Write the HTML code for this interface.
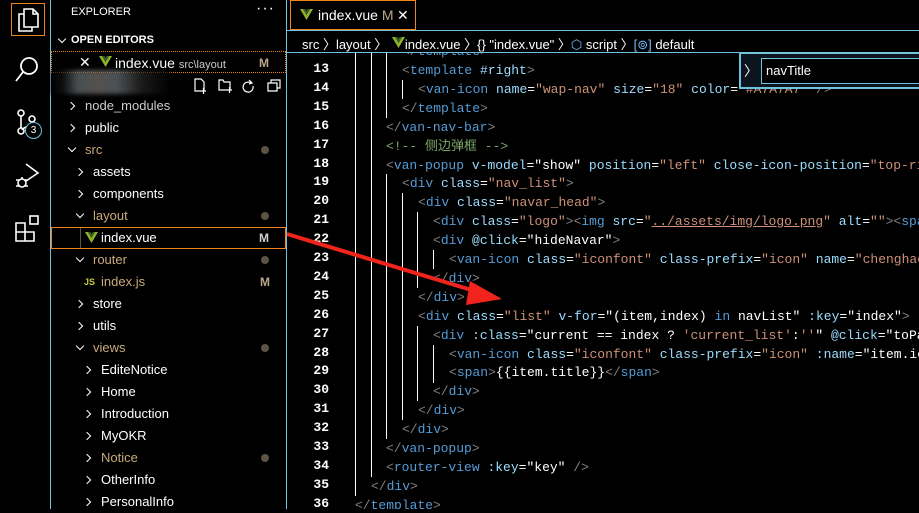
<!DOCTYPE html>
<html><head><meta charset="utf-8"><style>
*{margin:0;padding:0;box-sizing:border-box}
body{width:919px;height:509px;background:#000;overflow:hidden;position:relative;font-family:"Liberation Sans","Noto Sans CJK SC",sans-serif;color:#fff}
.abs{position:absolute}
.act{left:0;top:0;width:51px;height:509px;border-right:1px solid #6fc3df}
.side{left:51px;top:0;width:236px;height:509px;border-right:1px solid #6fc3df}
.row{position:absolute;left:0;width:235px;height:22px;font-size:13px;line-height:22px;white-space:nowrap}
.chev{position:absolute;width:6px;height:6px;border-right:1.4px solid #fff;border-bottom:1.4px solid #fff}
.r{transform:rotate(-45deg)}
.d{transform:rotate(45deg)}
.dot{position:absolute;right:17px;top:7px;width:8px;height:8px;border-radius:50%;background:#5c5343}
.M{position:absolute;right:16px;font-weight:bold;color:#b8a88a;font-size:12px}
.code{font-family:"Liberation Mono",monospace;font-size:13px;white-space:pre}
.ln{position:absolute;left:290px;width:39px;text-align:right;font-family:"Liberation Mono",monospace;font-size:13px;color:#fff;font-weight:bold}
.cl{position:absolute;left:355px;height:19px;line-height:19px}
.g{color:#808080}.t{color:#569cd6}.a{color:#9cdcfe}.s{color:#ce9178}.c{color:#7ca668}.w{color:#fff}
.guide{position:absolute;width:1px;background:#fff}
.vue{position:absolute}
</style></head><body>
<!-- activity bar -->
<div class="abs act">
 <div class="abs" style="left:11px;top:3px;width:34px;height:33px;border:1px solid #f38518"></div>
 <svg class="abs" style="left:15px;top:6px" width="26" height="28" viewBox="0 0 26 28" fill="none" stroke="#fff" stroke-width="1.6"><path d="M9 3h9l5 5v13H9z M18 3v5h5"/><path d="M9 8H4v17h13v-4"/></svg>
 <svg class="abs" style="left:14px;top:56px" width="26" height="28" fill="none" stroke="#fff" stroke-width="1.8"><circle cx="15" cy="10" r="8"/><path d="M9 16L2 25"/></svg>
 <svg class="abs" style="left:14px;top:108px" width="30" height="32" fill="none" stroke="#fff" stroke-width="1.6"><circle cx="7" cy="5" r="3"/><circle cx="7" cy="23" r="3"/><circle cx="18" cy="11" r="3"/><path d="M7 8v12M18 14c0 5-8 4-10 8"/></svg>
 <div class="abs" style="left:25px;top:122px;width:17px;height:17px;border:1px solid #6fc3df;border-radius:50%;background:#000;font-size:10px;text-align:center;line-height:15px">3</div>
 <svg class="abs" style="left:14px;top:160px" width="28" height="30" fill="none" stroke="#fff" stroke-width="1.6"><path d="M12 4l12 9-12 8"/><circle cx="8" cy="23" r="4"/><path d="M2 20h3M2 26h3M11 20h3M11 26h3M8 17v2"/></svg>
 <svg class="abs" style="left:14px;top:213px" width="28" height="30" fill="none" stroke="#fff" stroke-width="1.6"><path d="M2 10h9v9H2zM11 19h9v9h-9zM2 19h9v9H2z"/><rect x="16" y="3" width="8" height="8" stroke="#fff"/></svg>
</div>
<!-- sidebar -->
<div class="abs side">
 <div class="abs" style="left:20px;top:6px;font-size:11px">EXPLORER</div>
 <div class="abs" style="left:205px;top:0px;font-size:16px;letter-spacing:1px">···</div>
 <div class="chev d abs" style="left:8px;top:36px"></div>
 <div class="abs" style="left:20px;top:34px;font-size:11px;font-weight:bold">OPEN EDITORS</div>
 <div class="row" style="top:51px;border:1px dotted #f38518">
   <span class="abs" style="left:27px;top:-1px;font-size:14px">✕</span>
   <svg class="vue" style="left:47px;top:4px" width="13" height="12"><path d="M0 0h3l3.5 6L10 0h3L6.5 11z" fill="#8db32b"/><path d="M3 0h2.5l1 2 1-2H10L6.5 6z" fill="#3a5a2a"/></svg>
   <span class="abs" style="left:63px;font-size:14px">index.vue <span style="font-size:11px;color:#ccc">src\layout</span></span>
   <span class="M" style="top:0">M</span>
 </div>
 <div class="abs" style="left:0;top:70px;width:120px;height:24px;background:linear-gradient(90deg,#000 0,#111 10%,#5a6268 22%,#6a6560 40%,#5d666b 55%,#222 75%,#000);filter:blur(2px);opacity:.8"></div>
 <svg class="abs" style="left:142px;top:78px" width="90" height="16" fill="none" stroke="#fff" stroke-width="1.2"><path d="M2 1h6l3 3v9H2zM8 13h5M10.5 10v6"/><path d="M26 2h4l1 2h6v8H26zM34 12h5M36.5 9v6"/><path d="M58 5a5 5 0 1 0 2 3M56 2l3 3-3 1"/><path d="M75 5h9v8h-9zM78 5V2h9v8h-3"/></svg>
 <div class="row" style="top:95px"><div class="chev r" style="left:17px;top:8px"></div><span class="abs" style="left:34px;color:#ccc">node_modules</span></div>
 <div class="row" style="top:117px"><div class="chev r" style="left:17px;top:8px"></div><span class="abs" style="left:34px">public</span></div>
 <div class="row" style="top:139px"><div class="chev d" style="left:18px;top:6px"></div><span class="abs" style="left:34px;color:#c9a97a">src</span><div class="dot"></div></div>
 <div class="row" style="top:161px"><div class="chev r" style="left:25px;top:8px"></div><span class="abs" style="left:42px">assets</span></div>
 <div class="row" style="top:183px"><div class="chev r" style="left:25px;top:8px"></div><span class="abs" style="left:42px">components</span></div>
 <div class="row" style="top:205px"><div class="chev d" style="left:26px;top:6px"></div><span class="abs" style="left:42px;color:#c9a97a">layout</span><div class="dot"></div></div>
 <div class="row" style="top:227px;border:1px solid #f38518"><div class="abs" style="left:28px;top:0;width:1px;height:20px;background:#555"></div><svg class="vue" style="left:33px;top:4px" width="13" height="12"><path d="M0 0h3l3.5 6L10 0h3L6.5 11z" fill="#8db32b"/><path d="M3 0h2.5l1 2 1-2H10L6.5 6z" fill="#3a5a2a"/></svg><span class="abs" style="left:49px;top:-1px">index.vue</span><span class="M" style="top:-1px;color:#ccc">M</span></div>
 <div class="row" style="top:249px"><div class="chev d" style="left:26px;top:6px"></div><span class="abs" style="left:42px;color:#c9a97a">router</span><div class="dot"></div></div>
 <div class="row" style="top:271px"><span class="abs" style="left:33px;color:#cbcb41;font-size:9px;font-weight:bold">JS</span><span class="abs" style="left:50px;color:#c9a97a">index.js</span><span class="M">M</span></div>
 <div class="row" style="top:293px"><div class="chev r" style="left:25px;top:8px"></div><span class="abs" style="left:42px">store</span></div>
 <div class="row" style="top:315px"><div class="chev r" style="left:25px;top:8px"></div><span class="abs" style="left:42px">utils</span></div>
 <div class="row" style="top:337px"><div class="chev d" style="left:26px;top:6px"></div><span class="abs" style="left:42px;color:#c9a97a">views</span><div class="dot"></div></div>
 <div class="row" style="top:359px"><div class="chev r" style="left:33px;top:8px"></div><span class="abs" style="left:50px">EditeNotice</span></div>
 <div class="row" style="top:381px"><div class="chev r" style="left:33px;top:8px"></div><span class="abs" style="left:50px">Home</span></div>
 <div class="row" style="top:403px"><div class="chev r" style="left:33px;top:8px"></div><span class="abs" style="left:50px">Introduction</span></div>
 <div class="row" style="top:425px"><div class="chev r" style="left:33px;top:8px"></div><span class="abs" style="left:50px">MyOKR</span></div>
 <div class="row" style="top:447px"><div class="chev r" style="left:33px;top:8px"></div><span class="abs" style="left:50px;color:#c9a97a">Notice</span><div class="dot"></div></div>
 <div class="row" style="top:469px"><div class="chev r" style="left:33px;top:8px"></div><span class="abs" style="left:50px">OtherInfo</span></div>
 <div class="row" style="top:491px"><div class="chev r" style="left:33px;top:8px"></div><span class="abs" style="left:50px">PersonalInfo</span></div>
</div>
<!-- tabs -->
<div class="abs" style="left:290px;top:0;width:126px;height:30px;border:1px solid #f38518;font-size:14px;line-height:28px">
 <svg class="vue" style="left:9px;top:8px" width="13" height="12"><path d="M0 0h3l3.5 6L10 0h3L6.5 11z" fill="#8db32b"/><path d="M3 0h2.5l1 2 1-2H10L6.5 6z" fill="#3a5a2a"/></svg><span class="abs" style="left:27px">index.vue <span style="color:#b8a88a">M</span></span><span class="abs" style="left:106px;font-size:14px">✕</span>
</div>
<div class="abs" style="left:287px;top:30px;width:632px;height:1px;background:#6fc3df"></div>
<div class="abs" style="left:302px;top:34px;font-size:13px;white-space:nowrap">src 〉layout 〉 <span style="display:inline-block;width:14px"></span>index.vue 〉{} "index.vue" 〉<span style="color:#75beff">⬡</span> script 〉<span style="color:#75beff">[⊚]</span> default</div>
<svg class="vue" style="left:392px;top:37px" width="13" height="12"><path d="M0 0h3l3.5 6L10 0h3L6.5 11z" fill="#8db32b"/><path d="M3 0h2.5l1 2 1-2H10L6.5 6z" fill="#3a5a2a"/></svg>
<div class="abs" style="left:287px;top:52px;width:632px;height:1px;background:#6fc3df"></div>
<!-- code -->
<div class="abs" style="left:287px;top:53px;width:632px;height:456px;overflow:hidden">
<div style="position:absolute;left:-287px;top:-53px">
<div class="ln" style="top:61px">13</div><div class="ln" style="top:80px">14</div><div class="ln" style="top:99px">15</div><div class="ln" style="top:118px">16</div><div class="ln" style="top:137px">17</div><div class="ln" style="top:156px">18</div><div class="ln" style="top:174px">19</div><div class="ln" style="top:193px">20</div><div class="ln" style="top:212px">21</div><div class="ln" style="top:231px">22</div><div class="ln" style="top:250px">23</div><div class="ln" style="top:269px">24</div><div class="ln" style="top:288px">25</div><div class="ln" style="top:307px">26</div><div class="ln" style="top:326px">27</div><div class="ln" style="top:345px">28</div><div class="ln" style="top:363px">29</div><div class="ln" style="top:382px">30</div><div class="ln" style="top:401px">31</div><div class="ln" style="top:420px">32</div><div class="ln" style="top:439px">33</div><div class="ln" style="top:458px">34</div><div class="ln" style="top:477px">35</div><div class="ln" style="top:496px">36</div>
<div class="guide" style="left:355px;top:53px;height:443px"></div>
<div class="guide" style="left:371px;top:53px;height:424px"></div>
<div class="guide" style="left:386px;top:53px;height:65px"></div>
<div class="guide" style="left:386px;top:174px;height:265px"></div>
<div class="guide" style="left:402px;top:80px;height:19px"></div>
<div class="guide" style="left:402px;top:193px;height:227px"></div>
<div class="guide" style="left:417px;top:212px;height:76px"></div>
<div class="guide" style="left:417px;top:326px;height:75px"></div>
<div class="guide" style="left:433px;top:250px;height:19px"></div>
<div class="guide" style="left:433px;top:345px;height:38px"></div>
<div class="code">
<div class="cl" style="top:42px;left:402px"><span class="g">&lt;/</span><span class="t">template</span><span class="g">&gt;</span></div>
<div class="cl" style="top:61px;left:402px"><span class="g">&lt;</span><span class="t">template</span> <span class="a">#right</span><span class="g">&gt;</span></div>
<div class="cl" style="top:80px;left:418px"><span class="g">&lt;</span><span class="t">van-icon</span> <span class="a">name</span><span class="w">=</span><span class="s">"wap-nav"</span> <span class="a">size</span><span class="w">=</span><span class="s">"18"</span> <span class="a">color</span><span class="w">=</span><span class="s">"#A7A7A7"</span> <span class="g">/&gt;</span></div>
<div class="cl" style="top:99px;left:402px"><span class="g">&lt;/</span><span class="t">template</span><span class="g">&gt;</span></div>
<div class="cl" style="top:118px;left:386px"><span class="g">&lt;/</span><span class="t">van-nav-bar</span><span class="g">&gt;</span></div>
<div class="cl" style="top:137px;left:386px"><span class="c">&lt;!-- 侧边弹框 --&gt;</span></div>
<div class="cl" style="top:156px;left:386px"><span class="g">&lt;</span><span class="t">van-popup</span> <span class="a">v-model</span><span class="w">=</span><span class="w">"show"</span> <span class="a">position</span><span class="w">=</span><span class="s">"left"</span> <span class="a">close-icon-position</span><span class="w">=</span><span class="s">"top-right"</span></div>
<div class="cl" style="top:174px;left:402px"><span class="g">&lt;</span><span class="t">div</span> <span class="a">class</span><span class="w">=</span><span class="s">"nav_list"</span><span class="g">&gt;</span></div>
<div class="cl" style="top:193px;left:418px"><span class="g">&lt;</span><span class="t">div</span> <span class="a">class</span><span class="w">=</span><span class="s">"navar_head"</span><span class="g">&gt;</span></div>
<div class="cl" style="top:212px;left:433px"><span class="g">&lt;</span><span class="t">div</span> <span class="a">class</span><span class="w">=</span><span class="s">"logo"</span><span class="g">&gt;&lt;</span><span class="t">img</span> <span class="a">src</span><span class="w">=</span><span class="s">"<u>../assets/img/logo.png</u>"</span> <span class="a">alt</span><span class="w">=</span><span class="s">""</span><span class="g">&gt;&lt;</span><span class="t">span</span></div>
<div class="cl" style="top:231px;left:433px"><span class="g">&lt;</span><span class="t">div</span> <span class="a">@click</span><span class="w">=</span><span class="w">"hideNavar"</span><span class="g">&gt;</span></div>
<div class="cl" style="top:250px;left:449px"><span class="g">&lt;</span><span class="t">van-icon</span> <span class="a">class</span><span class="w">=</span><span class="s">"iconfont"</span> <span class="a">class-prefix</span><span class="w">=</span><span class="s">"icon"</span> <span class="a">name</span><span class="w">=</span><span class="s">"chenghao"</span></div>
<div class="cl" style="top:269px;left:433px"><span class="g">&lt;/</span><span class="t">div</span><span class="g">&gt;</span></div>
<div class="cl" style="top:288px;left:418px"><span class="g">&lt;/</span><span class="t">div</span><span class="g">&gt;</span></div>
<div class="cl" style="top:307px;left:418px"><span class="g">&lt;</span><span class="t">div</span> <span class="a">class</span><span class="w">=</span><span class="s">"list"</span> <span class="a">v-for</span><span class="w">="(item,index) </span><span class="t">in</span><span class="w"> navList"</span> <span class="a">:key</span><span class="w">="index"</span><span class="g">&gt;</span></div>
<div class="cl" style="top:326px;left:433px"><span class="g">&lt;</span><span class="t">div</span> <span class="a">:class</span><span class="w">="current == index ? </span><span class="s">'current_list'</span><span class="w">:</span><span class="s">''</span><span class="w">"</span> <span class="a">@click</span><span class="w">="toPage</span></div>
<div class="cl" style="top:345px;left:449px"><span class="g">&lt;</span><span class="t">van-icon</span> <span class="a">class</span><span class="w">=</span><span class="s">"iconfont"</span> <span class="a">class-prefix</span><span class="w">=</span><span class="s">"icon"</span> <span class="a">:name</span><span class="w">="item.icon"</span></div>
<div class="cl" style="top:363px;left:449px"><span class="g">&lt;</span><span class="t">span</span><span class="g">&gt;</span><span class="w">{{item.title}}</span><span class="g">&lt;/</span><span class="t">span</span><span class="g">&gt;</span></div>
<div class="cl" style="top:382px;left:433px"><span class="g">&lt;/</span><span class="t">div</span><span class="g">&gt;</span></div>
<div class="cl" style="top:401px;left:418px"><span class="g">&lt;/</span><span class="t">div</span><span class="g">&gt;</span></div>
<div class="cl" style="top:420px;left:402px"><span class="g">&lt;/</span><span class="t">div</span><span class="g">&gt;</span></div>
<div class="cl" style="top:439px;left:386px"><span class="g">&lt;/</span><span class="t">van-popup</span><span class="g">&gt;</span></div>
<div class="cl" style="top:458px;left:386px"><span class="g">&lt;</span><span class="t">router-view</span> <span class="a">:key</span><span class="w">="key"</span> <span class="g">/&gt;</span></div>
<div class="cl" style="top:477px;left:371px"><span class="g">&lt;/</span><span class="t">div</span><span class="g">&gt;</span></div>
<div class="cl" style="top:496px;left:355px"><span class="g">&lt;/</span><span class="t">template</span><span class="g">&gt;</span></div>
</div></div></div>
<!-- find widget -->
<div class="abs" style="left:739px;top:53px;width:180px;height:36px;background:#0c141f;border-left:2px solid #6fc3df;border-bottom:2px solid #6fc3df;border-top:1px solid #6fc3df"></div>
<div class="abs" style="left:744px;top:61px;color:#fff;font-size:14px">〉</div>
<div class="abs" style="left:761px;top:58px;width:158px;height:26px;border:1px solid #6fc3df;border-right:none;background:#000;font-size:13px;line-height:24px;padding-left:4px">navTitle</div>
<!-- red arrow -->
<svg class="abs" style="left:0;top:0" width="919" height="509"><path d="M287 234L478 292" stroke="#f0241c" stroke-width="4"/><path d="M502 299L470 281L466 305Z" fill="#f0241c"/></svg>
</body></html>
